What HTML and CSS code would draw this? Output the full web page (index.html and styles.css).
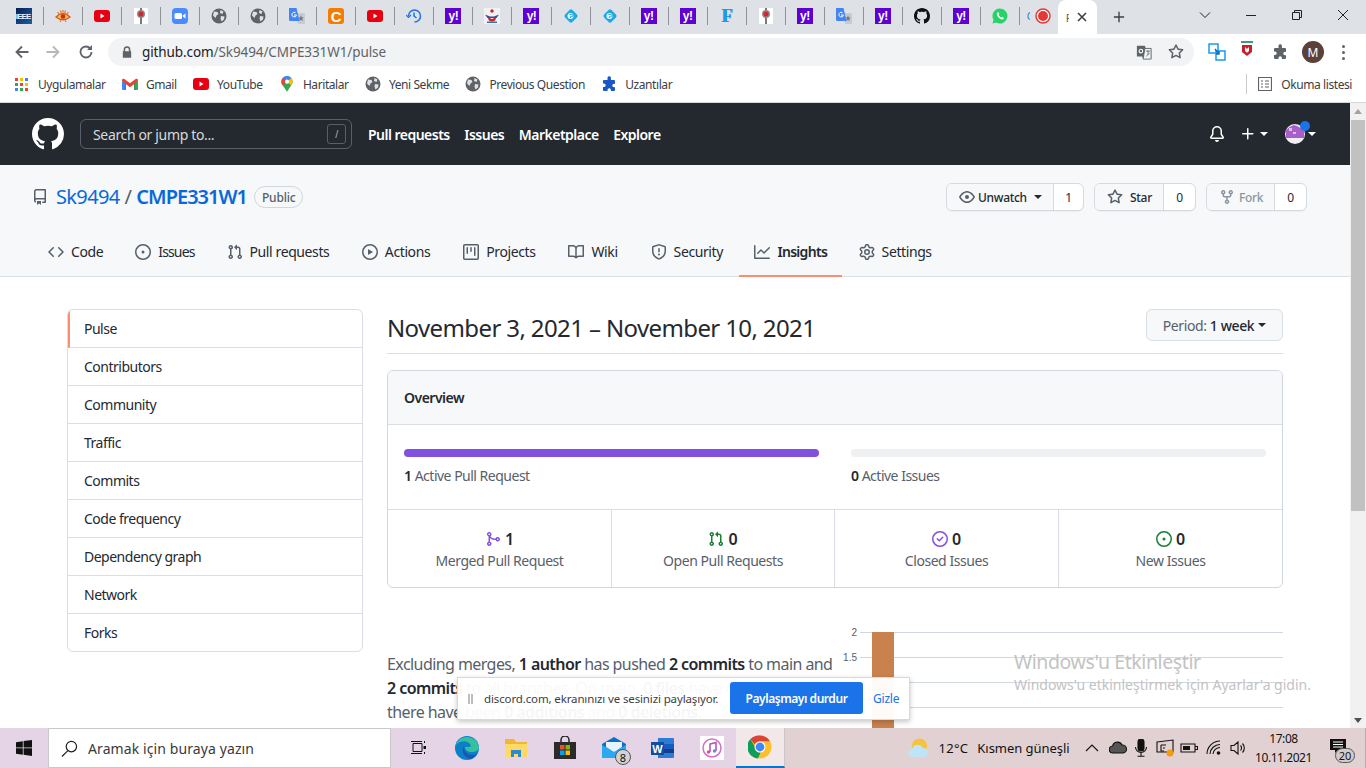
FILE: index.html
```html
<!DOCTYPE html>
<html lang="tr">
<head>
<meta charset="utf-8">
<title>Pulse · Sk9494/CMPE331W1</title>
<link rel="stylesheet" href="styles.css">
</head>
<body>
<svg class="sprite" aria-hidden="true">
<defs>
<symbol id="i-mark" viewBox="0 0 16 16"><path fill-rule="evenodd" d="M8 0C3.58 0 0 3.58 0 8c0 3.54 2.29 6.53 5.47 7.59.4.07.55-.17.55-.38 0-.19-.01-.82-.01-1.49-2.01.37-2.53-.49-2.69-.94-.09-.23-.48-.94-.82-1.13-.28-.15-.68-.52-.01-.53.63-.01 1.08.58 1.23.82.72 1.21 1.87.87 2.33.66.07-.52.28-.87.51-1.07-1.78-.2-3.64-.89-3.64-3.95 0-.87.31-1.59.82-2.15-.08-.2-.36-1.02.08-2.12 0 0 .67-.21 2.2.82.64-.18 1.32-.27 2-.27.68 0 1.36.09 2 .27 1.53-1.04 2.2-.82 2.2-.82.44 1.1.16 1.92.08 2.12.51.56.82 1.27.82 2.15 0 3.07-1.87 3.75-3.65 3.95.29.25.54.73.54 1.48 0 1.07-.01 1.93-.01 2.2 0 .21.15.46.55.38A8.013 8.013 0 0016 8c0-4.42-3.58-8-8-8z"/></symbol>
<symbol id="i-repo" viewBox="0 0 16 16"><path fill-rule="evenodd" d="M2 2.5A2.5 2.5 0 014.5 0h8.75a.75.75 0 01.75.75v12.5a.75.75 0 01-.75.75h-2.5a.75.75 0 110-1.5h1.75v-2h-8a1 1 0 00-.714 1.7.75.75 0 01-1.072 1.05A2.495 2.495 0 012 11.5v-9zm10.5-1V9h-8c-.356 0-.694.074-1 .208V2.5a1 1 0 011-1h8zM5 12.25v3.25a.25.25 0 00.4.2l1.45-1.087a.25.25 0 01.3 0L8.6 15.7a.25.25 0 00.4-.2v-3.25a.25.25 0 00-.25-.25h-3.5a.25.25 0 00-.25.25z"/></symbol>
<symbol id="i-code" viewBox="0 0 16 16"><path fill-rule="evenodd" d="M4.72 3.22a.75.75 0 011.06 1.06L2.06 8l3.72 3.72a.75.75 0 11-1.06 1.06L.47 8.53a.75.75 0 010-1.06l4.25-4.25zm6.56 0a.75.75 0 10-1.06 1.06L13.94 8l-3.72 3.72a.75.75 0 101.06 1.06l4.25-4.25a.75.75 0 000-1.06l-4.25-4.25z"/></symbol>
<symbol id="i-issue" viewBox="0 0 16 16"><path d="M8 9.5a1.5 1.5 0 100-3 1.5 1.5 0 000 3z"/><path fill-rule="evenodd" d="M8 0a8 8 0 100 16A8 8 0 008 0zM1.5 8a6.5 6.5 0 1113 0 6.5 6.5 0 01-13 0z"/></symbol>
<symbol id="i-pr" viewBox="0 0 16 16"><path fill-rule="evenodd" d="M7.177 3.073L9.573.677A.25.25 0 0110 .854v4.792a.25.25 0 01-.427.177L7.177 3.427a.25.25 0 010-.354zM3.75 2.5a.75.75 0 100 1.5.75.75 0 000-1.5zm-2.25.75a2.25 2.25 0 113 2.122v5.256a2.251 2.251 0 11-1.5 0V5.372A2.25 2.25 0 011.5 3.25zM11 2.5h-1V4h1a1 1 0 011 1v5.628a2.251 2.251 0 101.5 0V5A2.5 2.5 0 0011 2.5zm1 10.25a.75.75 0 111.5 0 .75.75 0 01-1.5 0zM3.75 12a.75.75 0 100 1.5.75.75 0 000-1.5z"/></symbol>
<symbol id="i-play" viewBox="0 0 16 16"><path fill-rule="evenodd" d="M1.5 8a6.5 6.5 0 1113 0 6.5 6.5 0 01-13 0zM8 0a8 8 0 100 16A8 8 0 008 0zM6.379 5.227A.25.25 0 006 5.442v5.117a.25.25 0 00.379.214l4.264-2.559a.25.25 0 000-.428L6.379 5.227z"/></symbol>
<symbol id="i-project" viewBox="0 0 16 16"><path fill-rule="evenodd" d="M1.75 0A1.75 1.75 0 000 1.75v12.5C0 15.216.784 16 1.75 16h12.5A1.75 1.75 0 0016 14.25V1.75A1.75 1.75 0 0014.25 0H1.75zM1.5 1.75a.25.25 0 01.25-.25h12.5a.25.25 0 01.25.25v12.5a.25.25 0 01-.25.25H1.75a.25.25 0 01-.25-.25V1.75zM11.75 3a.75.75 0 00-.75.75v7.5a.75.75 0 001.5 0v-7.5a.75.75 0 00-.75-.75zm-8.25.75a.75.75 0 011.5 0v5.5a.75.75 0 01-1.5 0v-5.5zM8 3a.75.75 0 00-.75.75v3.5a.75.75 0 001.5 0v-3.5A.75.75 0 008 3z"/></symbol>
<symbol id="i-book" viewBox="0 0 16 16"><path fill-rule="evenodd" d="M0 1.75A.75.75 0 01.75 1h4.253c1.227 0 2.317.59 3 1.501A3.744 3.744 0 0111.006 1h4.245a.75.75 0 01.75.75v10.5a.75.75 0 01-.75.75h-4.507a2.25 2.25 0 00-1.591.659l-.622.621a.75.75 0 01-1.06 0l-.622-.621A2.25 2.25 0 005.258 13H.75a.75.75 0 01-.75-.75V1.75zm8.755 3a2.25 2.25 0 012.25-2.25H14.5v9h-3.757c-.71 0-1.4.201-1.992.572l.004-7.322zm-1.504 7.324l.004-5.073-.002-2.253A2.25 2.25 0 005.003 2.5H1.5v9h3.757a3.75 3.75 0 011.994.574z"/></symbol>
<symbol id="i-shield" viewBox="0 0 16 16"><path fill-rule="evenodd" d="M7.467.133a1.75 1.75 0 011.066 0l5.25 1.68A1.75 1.75 0 0115 3.48V7c0 1.566-.32 3.182-1.303 4.682-.983 1.498-2.585 2.813-5.032 3.855a1.7 1.7 0 01-1.33 0c-2.447-1.042-4.049-2.357-5.032-3.855C1.32 10.182 1 8.566 1 7V3.48a1.75 1.75 0 011.217-1.667l5.25-1.68zm.61 1.429a.25.25 0 00-.153 0l-5.25 1.68a.25.25 0 00-.174.238V7c0 1.358.275 2.666 1.057 3.86.784 1.194 2.121 2.34 4.366 3.297a.2.2 0 00.154 0c2.245-.956 3.582-2.104 4.366-3.298C13.225 9.666 13.5 8.36 13.5 7V3.48a.25.25 0 00-.174-.237l-5.25-1.68zM9 10.5a1 1 0 11-2 0 1 1 0 012 0zm-.25-5.75a.75.75 0 10-1.5 0v3a.75.75 0 001.5 0v-3z"/></symbol>
<symbol id="i-graph" viewBox="0 0 16 16"><path fill-rule="evenodd" d="M1.5 1.75a.75.75 0 00-1.5 0v12.5c0 .414.336.75.75.75h14.5a.75.75 0 000-1.5H1.5V1.75zm14.28 2.53a.75.75 0 00-1.06-1.06L10 7.94 7.53 5.47a.75.75 0 00-1.06 0L3.22 8.72a.75.75 0 001.06 1.06L7 7.06l2.47 2.47a.75.75 0 001.06 0l5.25-5.25z"/></symbol>
<symbol id="i-gear" viewBox="0 0 16 16"><path fill-rule="evenodd" d="M7.429 1.525a6.593 6.593 0 011.142 0c.036.003.108.036.137.146l.289 1.105c.147.56.55.967.997 1.189.174.086.341.183.501.29.417.278.97.423 1.53.27l1.102-.303c.11-.03.175.016.195.046.219.31.41.641.573.989.014.031.022.11-.059.19l-.815.806c-.411.406-.562.957-.53 1.456a4.588 4.588 0 010 .582c-.032.499.119 1.05.53 1.456l.815.806c.08.08.073.159.059.19a6.494 6.494 0 01-.573.99c-.02.029-.086.074-.195.045l-1.103-.303c-.559-.153-1.112-.008-1.529.27-.16.107-.327.204-.5.29-.449.222-.851.628-.998 1.189l-.289 1.105c-.029.11-.101.143-.137.146a6.613 6.613 0 01-1.142 0c-.036-.003-.108-.037-.137-.146l-.289-1.105c-.147-.56-.55-.967-.997-1.189a4.502 4.502 0 01-.501-.29c-.417-.278-.97-.423-1.53-.27l-1.102.303c-.11.03-.175-.016-.195-.046a6.492 6.492 0 01-.573-.989c-.014-.031-.022-.11.059-.19l.815-.806c.411-.406.562-.957.53-1.456a4.587 4.587 0 010-.582c.032-.499-.119-1.05-.53-1.456l-.815-.806c-.08-.08-.073-.159-.059-.19a6.44 6.44 0 01.573-.99c.02-.029.086-.075.195-.045l1.103.303c.559.153 1.112.008 1.529-.27.16-.107.327-.204.5-.29.449-.222.851-.628.998-1.189l.289-1.105c.029-.11.101-.143.137-.146zM8 0c-.236 0-.47.01-.701.03-.743.065-1.29.615-1.458 1.261l-.29 1.106c-.017.066-.078.158-.211.224a5.994 5.994 0 00-.668.386c-.123.082-.233.09-.3.071L3.27 2.776c-.644-.177-1.392.02-1.82.63a7.977 7.977 0 00-.704 1.217c-.315.675-.111 1.422.363 1.891l.815.806c.05.048.098.147.088.294a6.084 6.084 0 000 .772c.01.147-.038.246-.088.294l-.815.806c-.474.469-.678 1.216-.363 1.891.2.428.436.835.704 1.218.428.609 1.176.806 1.82.63l1.103-.303c.066-.019.176-.011.299.071.213.143.436.272.668.386.133.066.194.158.212.224l.289 1.106c.169.646.715 1.196 1.458 1.26a8.094 8.094 0 001.402 0c.743-.064 1.29-.614 1.458-1.26l.29-1.106c.017-.066.078-.158.211-.224a5.98 5.98 0 00.668-.386c.123-.082.233-.09.3-.071l1.102.302c.644.177 1.392-.02 1.82-.63.268-.382.505-.789.704-1.217.315-.675.111-1.422-.364-1.891l-.814-.806c-.05-.048-.098-.147-.088-.294a6.1 6.1 0 000-.772c-.01-.147.039-.246.088-.294l.814-.806c.475-.469.679-1.216.364-1.891a7.992 7.992 0 00-.704-1.218c-.428-.609-1.176-.806-1.82-.63l-1.103.303c-.066.019-.176.011-.299-.071a5.991 5.991 0 00-.668-.386c-.133-.066-.194-.158-.212-.224L10.16 1.29C9.99.645 9.444.095 8.701.031A8.094 8.094 0 008 0zm1.5 8a1.5 1.5 0 11-3 0 1.5 1.5 0 013 0zM11 8a3 3 0 11-6 0 3 3 0 016 0z"/></symbol>
<symbol id="i-eye" viewBox="0 0 16 16"><path fill-rule="evenodd" d="M1.679 7.932c.412-.621 1.242-1.75 2.366-2.717C5.175 4.242 6.527 3.5 8 3.5c1.473 0 2.824.742 3.955 1.715 1.124.967 1.954 2.096 2.366 2.717a.119.119 0 010 .136c-.412.621-1.242 1.75-2.366 2.717C10.825 11.758 9.473 12.5 8 12.5c-1.473 0-2.824-.742-3.955-1.715C2.92 9.818 2.09 8.69 1.679 8.068a.119.119 0 010-.136zM8 2c-1.981 0-3.67.992-4.933 2.078C1.797 5.169.88 6.423.43 7.1a1.619 1.619 0 000 1.798c.45.678 1.367 1.932 2.637 3.024C4.329 13.008 6.019 14 8 14c1.981 0 3.67-.992 4.933-2.078 1.27-1.091 2.187-2.345 2.637-3.023a1.619 1.619 0 000-1.798c-.45-.678-1.367-1.932-2.637-3.023C11.671 2.992 9.981 2 8 2zm0 8a2 2 0 100-4 2 2 0 000 4z"/></symbol>
<symbol id="i-star" viewBox="0 0 16 16"><path fill-rule="evenodd" d="M8 .25a.75.75 0 01.673.418l1.882 3.815 4.21.612a.75.75 0 01.416 1.279l-3.046 2.97.719 4.192a.75.75 0 01-1.088.791L8 12.347l-3.766 1.98a.75.75 0 01-1.088-.79l.72-4.194L.818 6.374a.75.75 0 01.416-1.28l4.21-.611L7.327.668A.75.75 0 018 .25zm0 2.445L6.615 5.5a.75.75 0 01-.564.41l-3.097.45 2.24 2.184a.75.75 0 01.216.664l-.528 3.084 2.769-1.456a.75.75 0 01.698 0l2.77 1.456-.53-3.084a.75.75 0 01.216-.664l2.24-2.183-3.096-.45a.75.75 0 01-.564-.41L8 2.694z"/></symbol>
<symbol id="i-fork" viewBox="0 0 16 16"><path fill-rule="evenodd" d="M5 3.25a.75.75 0 11-1.5 0 .75.75 0 011.5 0zm0 2.122a2.25 2.25 0 10-1.5 0v.878A2.25 2.25 0 005.75 8.5h1.5v2.128a2.251 2.251 0 101.5 0V8.5h1.5a2.25 2.25 0 002.25-2.25v-.878a2.25 2.25 0 10-1.5 0v.878a.75.75 0 01-.75.75h-4.5A.75.75 0 015 6.25v-.878zm3.75 7.378a.75.75 0 11-1.5 0 .75.75 0 011.5 0zm3-8.75a.75.75 0 100-1.5.75.75 0 000 1.5z"/></symbol>
<symbol id="i-bell" viewBox="0 0 16 16"><path d="M8 16a2 2 0 001.985-1.75c.017-.137-.097-.25-.235-.25h-3.5c-.138 0-.252.113-.235.25A2 2 0 008 16z"/><path fill-rule="evenodd" d="M8 1.5A3.5 3.5 0 004.5 5v2.947c0 .346-.102.683-.294.97l-1.703 2.556a.018.018 0 00-.003.01l.001.006c0 .002.002.004.004.006a.017.017 0 00.006.004l.007.001h10.964l.007-.001a.018.018 0 00.006-.004.016.016 0 00.004-.006l.001-.007a.017.017 0 00-.003-.01l-1.703-2.554a1.75 1.75 0 01-.294-.97V5A3.5 3.5 0 008 1.5zM3 5a5 5 0 0110 0v2.947c0 .05.015.098.042.139l1.703 2.555A1.518 1.518 0 0113.482 13H2.518a1.518 1.518 0 01-1.263-2.36l1.703-2.554A.25.25 0 003 7.947V5z"/></symbol>
<symbol id="i-merge" viewBox="0 0 16 16"><path fill-rule="evenodd" d="M5 3.254V3.25v.005a.75.75 0 110-.005v.004zm.45 1.9a2.25 2.25 0 10-1.95.218v5.256a2.25 2.25 0 101.5 0V7.123A5.735 5.735 0 009.25 9h1.378a2.251 2.251 0 100-1.5H9.25a4.25 4.25 0 01-3.8-2.346zM12.75 9a.75.75 0 100-1.5.75.75 0 000 1.5zm-8.5 4.5a.75.75 0 100-1.5.75.75 0 000 1.5z"/></symbol>
<symbol id="i-closed" viewBox="0 0 16 16"><path d="M11.28 6.78a.75.75 0 00-1.06-1.06L7.25 8.69 5.78 7.22a.75.75 0 00-1.06 1.06l2 2a.75.75 0 001.06 0l3.5-3.5z"/><path fill-rule="evenodd" d="M16 8A8 8 0 110 8a8 8 0 0116 0zm-1.5 0a6.5 6.5 0 11-13 0 6.5 6.5 0 0113 0z"/></symbol>
<symbol id="i-plus" viewBox="0 0 16 16"><path fill-rule="evenodd" d="M7.75 2a.75.75 0 01.75.75V7h4.25a.75.75 0 110 1.5H8.5v4.25a.75.75 0 11-1.5 0V8.5H2.75a.75.75 0 010-1.5H7V2.75A.75.75 0 017.75 2z"/></symbol>
<symbol id="f-yt" viewBox="0 0 16 16"><rect y="2" width="16" height="12" rx="3" fill="#e60012"/><path d="M6.5 5.5v5l4-2.5z" fill="#fff"/></symbol>
<symbol id="f-globe" viewBox="0 0 16 16"><circle cx="8" cy="8" r="7.5" fill="#5f6368"/><path d="M3 3.5l3.5.5 1 2-2 1.5-1 2.5-2.5-2.5zM9.5 2l3 1.5-1 2.5-2.5-1zM10 8l3.5.5-.5 3-2.5 2-1-3z" fill="#dee1e6"/></symbol>
<symbol id="f-tr" viewBox="0 0 16 16"><path d="M7 5h9v10a1 1 0 01-1 1H9z" fill="#c8ccd1"/><path d="M12 7l.8 2.5h2.2l-1.8 1.3.7 2.4-1.9-1.5-1.9 1.5.7-2.4-1.8-1.3h2.2z" fill="#70757a"/><path d="M0 0h7.500L10.500 13H1.500A1.500 1.500 0 010 11.500z" fill="#4285f4"/><path d="M6.500 4.700a2.300 2.300 0 101 2.300H5" fill="none" stroke="#fff" stroke-width="1"/></symbol>
<symbol id="f-pin" viewBox="0 0 16 16"><rect x="1" width="14" height="16" fill="#fff"/><path d="M8 0v5M8 8v8" stroke="#333" stroke-width="1.300"/><circle cx="8" cy="6" r="4" fill="#8a8a8a"/><circle cx="8" cy="6" r="2.500" fill="#d9252a"/></symbol>
<symbol id="f-diamond" viewBox="0 0 16 16"><rect x="2.800" y="2.800" width="10.400" height="10.400" rx="2" fill="#1fa9e4" transform="rotate(45 8 8)"/><circle cx="7.500" cy="8" r="3" fill="#e8f7fd"/><path d="M6.500 6.500h2.200a1.100 1.100 0 010 2.200H7.400V10" fill="none" stroke="#1fa9e4" stroke-width="1"/></symbol>
<symbol id="g-puzzle" viewBox="0 0 16 16"><path d="M6.500 1.500a1.800 1.800 0 013.400 0V4H13a1 1 0 011 1v2.800h-1a1.700 1.700 0 000 3.400h1V14a1 1 0 01-1 1H9.900v-1a1.700 1.700 0 00-3.400 0v1H3a1 1 0 01-1-1v-3H3a1.700 1.700 0 000-3.400H2V5a1 1 0 011-1h3.500z"/></symbol>
<symbol id="g-chrome" viewBox="0 0 24 24"><circle cx="12" cy="12" r="11.500" fill="#fbc02d"/><path d="M12 .5a11.500 11.500 0 019.960 5.750H12a5.750 5.750 0 00-5.200 3.300L2.400 4.100A11.500 11.500 0 0112 .5z" fill="#db4437"/><path d="M2.400 4.100l4.800 8.300a5 5 0 005.500 5l-2.900 6A11.500 11.500 0 012.400 4.100z" fill="#0f9d58"/><circle cx="12" cy="12" r="5.500" fill="#fff"/><circle cx="12" cy="12" r="4.400" fill="#4285f4"/></symbol>
</defs>
</svg>

<div class="screen">
  <div class="tabstrip">
    <div class="tab first"><span class="fav f-ieee">IEEE</span></div>
    <div class="tab"><svg class="fav" viewBox="0 0 16 16"><path d="M1 9q7-7 14 0-7 5.500-14 0z" fill="#f9c84a" stroke="#d9541e" stroke-width="1.300"/><circle cx="8" cy="8.500" r="2.300" fill="#c62f10"/><path d="M2.500 4l1.500 2M5.500 2.500l.8 2.500M8 2v2.500M10.500 2.500l-.8 2.500M13.500 4L12 6M5 14l.8-1.500M11 14l-.8-1.500" stroke="#e8701a" stroke-width="1.100"/></svg></div>
    <div class="tab"><svg class="fav"><use href="#f-yt"/></svg></div>
    <div class="tab"><svg class="fav"><use href="#f-pin"/></svg></div>
    <div class="tab"><svg class="fav" viewBox="0 0 16 16"><rect width="16" height="16" rx="4" fill="#4a8cff"/><rect x="2.500" y="5" width="7.500" height="6" rx="1.500" fill="#fff"/><path d="M10.800 7.400l2.700-2v5.200l-2.700-2z" fill="#fff"/></svg></div>
    <div class="tab"><svg class="fav"><use href="#f-globe"/></svg></div>
    <div class="tab"><svg class="fav"><use href="#f-globe"/></svg></div>
    <div class="tab"><svg class="fav"><use href="#f-tr"/></svg></div>
    <div class="tab"><span class="fav f-c">C</span></div>
    <div class="tab"><svg class="fav"><use href="#f-yt"/></svg></div>
    <div class="tab"><svg class="fav" viewBox="0 0 16 16" fill="none" stroke="#1a73e8" stroke-width="1.500"><path d="M2.500 8a6 6 0 116 6"/><path d="M8 4.500V8l2.500 2"/><path d="M0 7l2.500 2.500L5 7" stroke-width="1.200"/></svg></div>
    <div class="tab"><span class="fav f-y">y!</span></div>
    <div class="tab"><svg class="fav" viewBox="0 0 16 16"><rect width="16" height="16" fill="#f2f2f2"/><circle cx="8" cy="3" r="1.700" fill="#c62828"/><path d="M1 6.500l5 2h4l5-2-2.500 3.500h-9z" fill="#2b4ea0"/><path d="M4 9.500a4 4 0 008 0l-1.500-.5a2.600 2.600 0 01-5 0z" fill="#c62828"/><path d="M3 13.500h10v1.500H3z" fill="#3b6db8"/></svg></div>
    <div class="tab"><span class="fav f-y">y!</span></div>
    <div class="tab"><svg class="fav"><use href="#f-diamond"/></svg></div>
    <div class="tab"><svg class="fav"><use href="#f-diamond"/></svg></div>
    <div class="tab"><span class="fav f-y">y!</span></div>
    <div class="tab"><span class="fav f-y">y!</span></div>
    <div class="tab"><span class="fav f-f">F</span></div>
    <div class="tab"><svg class="fav"><use href="#f-pin"/></svg></div>
    <div class="tab"><span class="fav f-y">y!</span></div>
    <div class="tab"><svg class="fav"><use href="#f-tr"/></svg></div>
    <div class="tab"><span class="fav f-y">y!</span></div>
    <div class="tab"><svg class="fav gh"><use href="#i-mark"/></svg></div>
    <div class="tab"><span class="fav f-y">y!</span></div>
    <div class="tab"><svg class="fav" viewBox="0 0 16 16"><path d="M8 .5a7.500 7.500 0 00-6.400 11.400L.5 15.500l3.700-1A7.500 7.500 0 108 .5z" fill="#25d366"/><path d="M5.500 4.500c-1 1-.8 2.700.7 4.600 1.600 2 3.500 2.800 4.700 2.200.8-.4 1-1.300.8-1.600L10 8.700l-.9.800C8.300 9.200 7 8 6.700 7.100l.7-.9-.8-1.800c-.3-.2-.8 0-1.100.1z" fill="#fff"/></svg></div>
    <div class="tab last"><span class="clip-g">G</span><svg class="fav rec" viewBox="0 0 16 16"><circle cx="8" cy="8" r="7" fill="#fff" stroke="#e53935" stroke-width="1.500"/><circle cx="8" cy="8" r="5" fill="#e53935"/></svg></div>
    <div class="tab-active"><span class="clip-p">P</span><svg class="tab-x" viewBox="0 0 10 10"><path d="M1 1l8 8M9 1l-8 8"/></svg></div>
    <svg class="newtab" viewBox="0 0 14 14"><path d="M7 1v12M1 7h12"/></svg>
    <div class="winctl">
      <svg class="wc wc-v" viewBox="0 0 12 12"><path d="M1 3.500l5 5 5-5"/></svg>
      <svg class="wc" viewBox="0 0 12 12"><path d="M1 6.500h10"/></svg>
      <svg class="wc" viewBox="0 0 12 12"><path d="M1.500 3.500h7v7h-7zM3.500 3.500v-2h7v7h-2"/></svg>
      <svg class="wc" viewBox="0 0 12 12"><path d="M1 1l10 10M11 1L1 11"/></svg>
    </div>
  </div>

  <div class="toolbar">
    <svg class="nav-ic back" viewBox="0 0 16 16"><path d="M14.500 8H2.500M8 2.500L2.500 8 8 13.500"/></svg>
    <svg class="nav-ic fwd" viewBox="0 0 16 16"><path d="M1.500 8h12M8 2.500L13.500 8 8 13.500"/></svg>
    <svg class="nav-ic reload" viewBox="0 0 16 16"><path d="M13.500 8A5.500 5.500 0 112.500 8a5.500 5.500 0 019.600-3.600"/><path class="solid" d="M14 1v5H9z"/></svg>
    <div class="omnibox">
      <svg class="lock" viewBox="0 0 12 14"><path d="M2 6V4a4 4 0 018 0v2h1v8H1V6zm1.800 0h4.400V4a2.200 2.200 0 00-4.400 0z"/></svg>
      <span class="url"><b>github.com</b>/Sk9494/CMPE331W1/pulse</span>
      <svg class="omni-tr" viewBox="0 0 18 18"><path d="M1 2h9l1 3h6v12H8l-1-3H1z" fill="#5f6368"/><path d="M10 5h7v12H8z" fill="#f1f3f4" stroke="#5f6368"/><circle cx="5.500" cy="8" r="2" fill="none" stroke="#fff" stroke-width="1.200"/><path d="M11 8h5M13.500 7v5M11.500 14l4-4" stroke="#5f6368" stroke-width=".9"/></svg>
      <svg class="omni-star" viewBox="0 0 16 16"><use href="#i-star"/></svg>
    </div>
    <svg class="ext ext-tr" viewBox="0 0 18 18" fill="none" stroke="#1a9bf0" stroke-width="1.500"><path d="M1 1h9v9H1zM8 8h9v9H8z"/><path d="M7 6l4 5m0-3v3H8" stroke="#0b6fc2"/></svg>
    <svg class="ext ext-mc" viewBox="0 0 16 18"><path d="M2 0h12v2H2z" fill="#3b9d7d"/><path d="M3 4h10v7l-5 4-5-4z" fill="#c8202a"/><path d="M6 6v4l2 1.800L10 10V6L8 8z" fill="#fff"/></svg>
    <svg class="ext ext-pz"><use href="#g-puzzle"/></svg>
    <span class="profile">M</span>
    <span class="dots"><i></i><i></i><i></i></span>
  </div>

  <div class="bookmarks">
    <span class="bm bm-apps"><span class="apps"><i class="r"></i><i class="y"></i><i class="b"></i><i class="g"></i><i class="r"></i><i class="y"></i><i class="b"></i><i class="g"></i><i class="r"></i></span>Uygulamalar</span>
    <span class="bm"><svg class="bm-ic" viewBox="0 0 16 12"><path d="M1 12V2l7 5.500L15 2v10h-3V6L8 9 4 6v6z" fill="#5f6368"/><path d="M0 2a1.500 1.500 0 012.400-1L8 5.300 13.600 1A1.500 1.500 0 0116 2v1L8 9 0 3z" fill="#ea4335"/><path d="M0 3v8a1 1 0 001 1h2.500V5.500z" fill="#4285f4"/><path d="M16 3v8a1 1 0 01-1 1h-2.500V5.500z" fill="#34a853"/></svg>Gmail</span>
    <span class="bm"><svg class="bm-ic"><use href="#f-yt"/></svg>YouTube</span>
    <span class="bm"><svg class="bm-ic" viewBox="0 0 12 17"><path d="M6 0a6 6 0 016 6c0 3.500-4 6.500-6 11-2-4.500-6-7.500-6-11a6 6 0 016-6z" fill="#34a853"/><path d="M1.500 2L6 6l4.500-4A6 6 0 006 0a6 6 0 00-4.500 2z" fill="#4285f4"/><path d="M1.500 2A6 6 0 000 6c0 1.500.6 2.800 1.500 4L6 6z" fill="#ea4335"/><path d="M12 6a6 6 0 00-1.500-4L6 6l4 3.800C11.200 8.600 12 7.400 12 6z" fill="#fbbc04"/><circle cx="6" cy="6" r="2.200" fill="#fff"/></svg>Haritalar</span>
    <span class="bm"><svg class="bm-ic"><use href="#f-globe"/></svg>Yeni Sekme</span>
    <span class="bm"><svg class="bm-ic"><use href="#f-globe"/></svg>Previous Question</span>
    <span class="bm"><svg class="bm-ic blue"><use href="#g-puzzle"/></svg>Uzantılar</span>
    <span class="reading"><svg class="rl-ic" viewBox="0 0 14 14"><path d="M.5.500h13v13H.5zM3 4h2M7 4h4M3 7h2M7 7h4M3 10h2M7 10h4"/></svg>Okuma listesi</span>
  </div>

  <div class="viewport">
    <div class="page">
      <header class="gh-header">
        <svg class="gh-logo"><use href="#i-mark"/></svg>
        <div class="gh-search"><span>Search or jump to...</span><kbd class="slash">/</kbd></div>
        <nav class="gh-nav"><a>Pull requests</a><a>Issues</a><a>Marketplace</a><a>Explore</a></nav>
        <div class="gh-right">
          <svg class="oct16"><use href="#i-bell"/></svg>
          <span class="plus-group"><svg class="oct16 plus"><use href="#i-plus"/></svg><i class="caret light"></i></span>
          <span class="avatar-group"><svg class="avatar" viewBox="0 0 20 20"><circle cx="10" cy="10" r="10" fill="#f1eef3"/><path d="M1 6q4-4 8-5l3 1 7 4v8H1z" fill="#a85fc9"/><path d="M4 4h3v3H4zM8 8h3v2H8z" fill="#d9c2e8"/></svg><i class="dot"></i><i class="caret light"></i></span>
        </div>
      </header>

      <section class="repohead">
        <div class="repo-row">
          <svg class="oct16 repo-ic"><use href="#i-repo"/></svg>
          <a class="owner">Sk9494</a><span class="sep">/</span><a class="rname">CMPE331W1</a>
          <span class="pub">Public</span>
          <div class="actions">
            <div class="btn-group"><span class="btn watch"><svg class="oct16"><use href="#i-eye"/></svg>Unwatch<i class="caret"></i></span><span class="count">1</span></div>
            <div class="btn-group"><span class="btn star"><svg class="oct16"><use href="#i-star"/></svg>Star</span><span class="count">0</span></div>
            <div class="btn-group"><span class="btn fork"><svg class="oct16"><use href="#i-fork"/></svg>Fork</span><span class="count">0</span></div>
          </div>
        </div>
        <nav class="repo-tabs">
          <a class="rt"><svg class="oct16"><use href="#i-code"/></svg>Code</a>
          <a class="rt rt-issues"><svg class="oct16"><use href="#i-issue"/></svg>Issues</a>
          <a class="rt"><svg class="oct16"><use href="#i-pr"/></svg>Pull requests</a>
          <a class="rt"><svg class="oct16"><use href="#i-play"/></svg>Actions</a>
          <a class="rt"><svg class="oct16"><use href="#i-project"/></svg>Projects</a>
          <a class="rt"><svg class="oct16"><use href="#i-book"/></svg>Wiki</a>
          <a class="rt"><svg class="oct16"><use href="#i-shield"/></svg>Security</a>
          <a class="rt on"><svg class="oct16"><use href="#i-graph"/></svg>Insights</a>
          <a class="rt"><svg class="oct16"><use href="#i-gear"/></svg>Settings</a>
        </nav>
      </section>

      <div class="content">
        <aside class="side">
          <a class="side-item on">Pulse</a>
          <a class="side-item">Contributors</a>
          <a class="side-item">Community</a>
          <a class="side-item">Traffic</a>
          <a class="side-item">Commits</a>
          <a class="side-item">Code frequency</a>
          <a class="side-item">Dependency graph</a>
          <a class="side-item">Network</a>
          <a class="side-item">Forks</a>
        </aside>
        <main class="main">
          <div class="main-head">
            <h2>November 3, 2021 – November 10, 2021</h2>
            <span class="period">Period: <b>1 week</b><i class="caret dark"></i></span>
          </div>
          <div class="box">
            <div class="box-head">Overview</div>
            <div class="box-bars">
              <div class="barcol"><div class="track"><div class="fill"></div></div><p><b>1</b> Active Pull Request</p></div>
              <div class="barcol"><div class="track"></div><p><b>0</b> Active Issues</p></div>
            </div>
            <div class="stats">
              <div class="stat"><div class="num"><svg class="oct16 purple"><use href="#i-merge"/></svg>1</div><div class="lbl">Merged Pull Request</div></div>
              <div class="stat"><div class="num"><svg class="oct16 green"><use href="#i-pr"/></svg>0</div><div class="lbl">Open Pull Requests</div></div>
              <div class="stat"><div class="num"><svg class="oct16 purple"><use href="#i-closed"/></svg>0</div><div class="lbl">Closed Issues</div></div>
              <div class="stat"><div class="num"><svg class="oct16 green"><use href="#i-issue"/></svg>0</div><div class="lbl">New Issues</div></div>
            </div>
          </div>
          <div class="summary">
            <p class="sumtext">Excluding merges, <b>1 author</b> has pushed <b>2 commits</b> to main and<br><b>2 commits</b> to all branches. On main, <b>0 files</b> have changed and<br>there have been <b>0 additions</b> and <b>0 deletions</b>.</p>
            <svg class="chart" viewBox="0 0 446 110">
              <g class="gridl"><path d="M23 7.500H446M23 32.500H446M23 57.500H446M23 82.500H446M23 107.500H446"/></g>
              <rect x="35" y="7" width="22" height="103" fill="#c9824d"/>
              <g class="ticks"><text x="20" y="11">2</text><text x="20" y="36">1.5</text><text x="20" y="61">1</text><text x="20" y="86">0.5</text></g>
            </svg>
          </div>
        </main>
      </div>
    </div>
    <div class="scrollbar">
      <i class="arr up"></i>
      <div class="thumb"></div>
      <i class="arr down"></i>
    </div>
    <div class="watermark"><div class="wm1">Windows'u Etkinleştir</div><div class="wm2">Windows'u etkinleştirmek için Ayarlar'a gidin.</div></div>
    <div class="sharebar">
      <span class="grip"></span>
      <span class="share-t">discord.com, ekranınızı ve sesinizi paylaşıyor.</span>
      <span class="share-b">Paylaşmayı durdur</span>
      <span class="share-h">Gizle</span>
    </div>
  </div>

  <footer class="taskbar">
    <svg class="winlogo" viewBox="0 0 16 16"><path d="M0 2.200l6.800-1v6.300H0zM7.600 1.100L16 0v7.500H7.600zM0 8.300h6.800v6.400L0 13.800zM7.600 8.300H16V16l-8.400-1.200z"/></svg>
    <div class="tb-search"><svg class="tb-mag" viewBox="0 0 18 18"><circle cx="11" cy="7" r="5.500"/><path d="M7 11.500l-6 6"/></svg>Aramak için buraya yazın</div>
    <div class="tile"><svg class="tvw" viewBox="0 0 16 16"><path d="M3 3.500h9v8H3zM1 1.500h11M1 13.500h11M14.500 1v2M14.500 12v2"/><rect x="13.500" y="6" width="2.500" height="3" fill="#111" stroke="none"/></svg></div>
    <div class="tile"><svg class="tb-ic" viewBox="0 0 24 24"><circle cx="12" cy="12" r="12" fill="#0c7fc9"/><path d="M24 12c0-6-5-11-12-11C6 1 2 5 1 9c3-4 9-5 13-2 2 1.500 2 3 1 4h-5c0 3 3 5 7 5 3 0 6-1 7-4z" fill="#35c1a0"/><path d="M9 10c-3 4-1 11 6 13 3-.5 5-2 7-5-4 2-10 1-12-3-.7-1.500-1-3-1-5z" fill="#1a57b0"/></svg></div>
    <div class="tile"><svg class="tb-ic" viewBox="0 0 24 24"><path d="M1 3h9l2 3h11v15H1z" fill="#f2b635"/><path d="M1 8h22v13H1z" fill="#ffd865"/><path d="M7 14h10v7h-3v-3h-4v3H7z" fill="#2a8ad4"/></svg></div>
    <div class="tile"><svg class="tb-ic" viewBox="0 0 24 24"><path d="M8 6V4a4 4 0 018 0v2" fill="none" stroke="#222" stroke-width="1.500"/><path d="M1 6h22v17H1z" fill="#2b2b2b"/><rect x="7" y="9" width="4.500" height="4.500" fill="#f25022"/><rect x="12.500" y="9" width="4.500" height="4.500" fill="#7fba00"/><rect x="7" y="14.500" width="4.500" height="4.500" fill="#00a4ef"/><rect x="12.500" y="14.500" width="4.500" height="4.500" fill="#ffb900"/></svg></div>
    <div class="tile mail"><svg class="tb-ic" viewBox="0 0 24 24"><path d="M0 8L12 1l12 7v14H0z" fill="#0f6fc6"/><path d="M0 9l12 7 12-7v13H0z" fill="#2ba8ee"/><path d="M4 6h16v5l-8 5-8-5z" fill="#e8f4fc"/></svg><span class="badge">8</span></div>
    <div class="tile"><svg class="tb-ic" viewBox="0 0 24 24"><path d="M7 2h15a1 1 0 011 1v18a1 1 0 01-1 1H7z" fill="#2b7cd3"/><path d="M7 8h16v5H7z" fill="#185abd"/><path d="M7 13h16v4H7z" fill="#103f91"/><rect x="0" y="6" width="13" height="13" fill="#124ca5"/><text x="6.500" y="16.500" class="w-txt">W</text></svg></div>
    <div class="tile"><svg class="tb-ic" viewBox="0 0 24 24"><rect width="24" height="24" fill="#fff"/><circle cx="12" cy="12" r="9" fill="none" stroke="#d36fc6" stroke-width="1.500"/><path d="M10 16V8l6-1.500V15" fill="none" stroke="#b04fb0" stroke-width="1.500"/><circle cx="8.500" cy="16" r="1.700" fill="#ea4c89"/><circle cx="14.500" cy="15" r="1.700" fill="#5a8cf0"/></svg></div>
    <div class="tile active"><svg class="tb-ic"><use href="#g-chrome"/></svg></div>
    <div class="tray">
      <svg class="tr-weather" viewBox="0 0 24 20"><circle cx="13" cy="8" r="8" fill="#f8c33c"/><path d="M6 19.500a4.500 4.500 0 01-.5-9 6 6 0 0111-.5A4.500 4.500 0 0118 19.500z" fill="#bfe3f7"/></svg>
      <span class="temp">12°C</span><span class="wx">Kısmen güneşli</span>
      <svg class="tr chev" viewBox="0 0 14 14"><path d="M1 10l6-6 6 6"/></svg>
      <svg class="tr cloud" viewBox="0 0 18 14"><path d="M4 12a3.500 3.500 0 01-.4-7A5 5 0 0113 4a4 4 0 011 8z" fill="#555"/></svg>
      <svg class="tr mic" viewBox="0 0 14 18"><rect x="4" y="0" width="6" height="12" rx="3" fill="#111"/><path d="M1.500 8a5.500 5.500 0 0011 0M7 13.500V17M3.500 17.200h7"/></svg>
      <svg class="tr meet" viewBox="0 0 18 18"><path d="M1 3l16-2v12H1z"/><path d="M5 6h5M5 6v6h3M7 9h2"/><circle cx="14" cy="14" r="3.500" fill="#f59a0c" stroke="none"/></svg>
      <svg class="tr batt" viewBox="0 0 18 12"><path d="M1 2h14v8H1zM15.500 4.500h2v3h-2"/><rect x="3" y="4" width="7" height="4" fill="#111" stroke="none"/></svg>
      <svg class="tr wifi" viewBox="0 0 16 16"><path d="M1 14A13 13 0 0114 1M4 14A10 10 0 0114 4.500M7 14a7 7 0 017-6.500"/><circle cx="12.500" cy="13" r="1.800" fill="#111" stroke="none"/></svg>
      <svg class="tr vol" viewBox="0 0 16 16"><path d="M1 5.500h3L8 2v12l-4-3.500H1zM10.500 5.500a3.500 3.500 0 010 5M12.500 3.500a6.500 6.500 0 010 9"/></svg>
      <div class="clock"><div>17:08</div><div>10.11.2021</div></div>
      <div class="notif"><svg class="notif-ic" viewBox="0 0 16 14"><path d="M0 0h16v11H8l-3 3v-3H0z"/><path d="M3 3h10M3 5.500h10M3 8h10" stroke="#fff"/></svg><span class="notif-n">20</span></div>
      <i class="desktop"></i>
    </div>
  </footer>
</div>
</body>
</html>
```

FILE: styles.css
```css
* { box-sizing: border-box; }
html, body { margin: 0; padding: 0; height: 100%; }
body { font-family: "Noto Sans", "Open Sans", sans-serif; color: #24292f; overflow: hidden; }
.sprite { width: 0; height: 0; display: block; overflow: hidden; }
p, h2 { margin: 0; font-weight: 400; }
svg { display: block; flex: none; }
.screen { width: 1366px; height: 768px; display: flex; flex-direction: column; overflow: hidden; }

/* tab strip */
.tabstrip { height: 34px; flex: none; background: #dee1e6; display: flex; align-items: center; padding-left: 4.500px; }
.tab { width: 39.05px; height: 18px; margin-top: -2px; flex: none; display: flex; align-items: center; justify-content: center; border-right: 1px solid #8f9296; }
.tab.first { width: 39.4px; }
.tab.last { width: 37.600px; border-right: 0; justify-content: flex-end; padding-right: 7px; gap: 0; overflow: hidden; }
.fav { width: 16px; height: 16px; display: block; flex: none; }
span.fav { display: flex; align-items: center; justify-content: center; font-family: "Liberation Sans", sans-serif; font-weight: 700; }
.f-y { background: #5f01d1; color: #fff; font-size: 12px; letter-spacing: -.5px; }
.f-ieee { background: linear-gradient(135deg, #0b1f4f, #1a5fa8); color: #e6eeff; font-size: 8px; letter-spacing: -.9px; padding-right: 1px; }
.f-c { background: #f57c00; color: #fff; font-size: 15px; border-radius: 3px; }
.f-f { color: #1a9ae8; font-size: 18px; font-family: "Liberation Serif", serif !important; text-shadow: 1px 0 0 #1a9ae8; }
.gh { fill: #111; }
.clip-g { font-size: 10px; color: #1a73e8; width: 3px; overflow: hidden; margin-right: 5px; }
.tab-active { width: 39px; height: 34px; background: #fff; border-radius: 8px 8px 0 0; display: flex; align-items: center; flex: none; padding-left: 8px; }
.clip-p { font-size: 11px; color: #5f6368; width: 3px; overflow: hidden; margin-right: 8px; }
.tab-x { width: 10px; height: 10px; fill: none; stroke: #3c4043; stroke-width: 1.600; }
.newtab { width: 12px; height: 12px; margin-left: 16px; fill: none; stroke: #3c4043; stroke-width: 1.600; }
.winctl { margin-left: auto; display: flex; }
.wc { width: 12px; height: 12px; margin: -4px 17px 0; fill: none; stroke: #222; stroke-width: 1; }

/* toolbar */
.toolbar { height: 34px; flex: none; background: #fff; display: flex; align-items: center; padding: 2px 0 0 14px; }
.nav-ic { width: 16px; height: 16px; fill: none; stroke: #5f6368; stroke-width: 1.800; }
.nav-ic.fwd { margin-left: 15px; stroke: #b5b7ba; }
.nav-ic.reload { margin-left: 17px; }
.nav-ic .solid { fill: #5f6368; stroke: none; }
.omnibox { width: 1086px; height: 28px; margin-left: 14px; background: #f1f3f4; border-radius: 14px; display: flex; align-items: center; padding-left: 14px; }
.lock { width: 10px; height: 12px; fill: #5f6368; }
.url { margin-left: 10px; font-size: 13.500px; letter-spacing: -.1px; color: #5f6368; }
.url b { font-weight: 400; color: #202124; }
.omni-tr { width: 16px; height: 16px; margin-left: auto; }
.omni-star { width: 16px; height: 16px; margin: 0 10px 0 16px; fill: #5f6368; }
.ext { width: 18px; height: 18px; }
.ext-tr { margin-left: 14px; }
.ext-mc { margin-left: 13px; width: 16px; height: 18px; margin-top: -4px; }
.ext-pz { margin-left: 17px; width: 16px; height: 16px; fill: #5f6368; }
.profile { width: 22px; height: 22px; margin-left: 14px; border-radius: 50%; background: #5d4037; color: #fff; font-size: 12px; display: flex; align-items: center; justify-content: center; }
.dots { margin-left: 18px; display: flex; flex-direction: column; gap: 3px; }
.dots i { width: 3px; height: 3px; border-radius: 50%; background: #5f6368; display: block; }

/* bookmarks */
.bookmarks { height: 34px; flex: none; background: #fff; display: flex; align-items: center; padding: 0 0 2px 15px; font-size: 12px; color: #3c4043; letter-spacing: -.42px; }
.bm { display: flex; align-items: center; gap: 8px; margin-right: 16.300px; white-space: nowrap; }
.bm-apps { gap: 10px; }
.bm-ic { width: 16px; height: 16px; }
.bm-ic.blue { fill: #1a56c4; }
.apps { width: 13px; height: 13px; display: grid; grid-template-columns: repeat(3, 3px); gap: 2px; }
.apps i { width: 3px; height: 3px; display: block; }
.apps .r { background: #ea4335; } .apps .y { background: #fbbc04; } .apps .b { background: #4285f4; } .apps .g { background: #34a853; }
.reading { margin-left: auto; height: 20px; border-left: 1px solid #c8cacc; padding-left: 11px; margin-right: 14px; display: flex; align-items: center; gap: 9px; }
.rl-ic { width: 14px; height: 14px; fill: none; stroke: #5f6368; stroke-width: 1.200; }

/* viewport */
.viewport { flex: 1; min-height: 0; display: flex; position: relative; border-top: 1px solid #d5d7da; }
.page { flex: 1; min-width: 0; background: #fff; overflow: hidden; }
.scrollbar { width: 16px; flex: none; background: #f1f1f1; display: flex; flex-direction: column; align-items: center; }
.thumb { width: 14px; height: 391px; background: #c1c1c1; }
.arr { display: block; width: 0; height: 0; border-left: 4px solid transparent; border-right: 4px solid transparent; }
.arr.up { border-bottom: 5px solid #a3a3a3; margin: 6px 0; }
.arr.down { border-top: 5px solid #505050; margin-top: auto; margin-bottom: 5px; }

/* github header */
.gh-header { height: 62px; background: #24292f; display: flex; align-items: center; padding: 0 32px; color: #fff; }
.gh-logo { width: 32px; height: 32px; fill: #fff; }
.gh-search { width: 272px; height: 30px; margin-left: 16px; border: 1px solid #57606a; border-radius: 6px; display: flex; align-items: center; padding: 0 5px 0 12px; justify-content: space-between; font-size: 14px; color: #d7dade; letter-spacing: -.35px; }
.slash { width: 19px; height: 20px; border: 1px solid #57606a; border-radius: 3px; font-size: 11px; font-family: "Liberation Sans", sans-serif; display: flex; align-items: center; justify-content: center; color: #a6abb1; }
.gh-nav { display: flex; gap: 14.600px; margin-left: 16px; font-size: 14px; font-weight: 600; letter-spacing: -.52px; white-space: nowrap; }
.gh-right { margin-left: auto; display: flex; align-items: center; margin-right: 2px; }
.oct16 { width: 16px; height: 16px; fill: currentColor; display: block; flex: none; }
.plus-group { display: flex; align-items: center; margin-left: 15px; gap: 4px; }
.caret { display: inline-block; width: 0; height: 0; border-left: 4px solid transparent; border-right: 4px solid transparent; border-top: 4px solid #57606a; }
.caret.light { border-top-color: #fff; }
.caret.dark { border-top-color: #24292f; margin-left: 4px; }
.avatar-group { display: flex; align-items: center; margin-left: 17px; position: relative; gap: 3px; }
.avatar { width: 20px; height: 20px; }
.dot { position: absolute; left: 15px; top: -3px; width: 10px; height: 10px; border-radius: 50%; background: #1a73e8; }

/* repo head */
.repohead { height: 112px; background: #f6f8fa; border-bottom: 1px solid #d8dee4; display: flex; flex-direction: column; }
.repo-row { height: 28px; margin-top: 18px; padding: 0 43px 0 32px; display: flex; align-items: center; font-size: 20px; letter-spacing: -.65px; }
.repo-ic { color: #57606a; margin-right: 8px; }
.owner, .rname, .sep { margin-top: -2px; }
.owner, .rname { color: #0969da; }
.rname { font-weight: 600; letter-spacing: -1px; }
.sep { margin-left: 5px; margin-right: 5px; color: #57606a; }
.pub { margin-left: 7px; height: 22px; padding: 0 7px; border: 1px solid #d0d7de; border-radius: 11px; font-size: 12px; font-weight: 500; letter-spacing: -.2px; color: #57606a; display: flex; align-items: center; }
.actions { margin-left: auto; display: flex; gap: 10px; font-size: 12px; letter-spacing: -.3px; }
.btn-group { display: flex; height: 28px; border: 1px solid #d6dae0; border-radius: 6px; background: #fff; overflow: hidden; box-shadow: 0 1px 0 rgba(27,31,36,.04); }
.btn { display: flex; align-items: center; background: #f6f8fa; border-right: 1px solid #d6dae0; color: #24292f; white-space: nowrap; font-weight: 500; }
.btn .oct16 { color: #57606a; }
.btn .caret { border-top-color: #24292f; }
.btn.watch { width: 107px; padding-left: 12px; gap: 3px; }
.btn.watch .caret { margin-left: 4px; }
.btn.star { width: 69px; padding-left: 12px; gap: 7px; }
.btn.fork { width: 68px; padding-left: 12px; gap: 4px; color: #8c959f; }
.btn.fork .oct16 { color: #8c959f; }
.count { width: 31px; display: flex; align-items: center; justify-content: center; color: #24292f; }
.watch + .count { width: 29px; }
.repo-tabs { margin-top: auto; display: flex; padding-left: 32px; height: 48px; font-size: 14px; letter-spacing: -.4px; }
.rt { display: flex; align-items: center; gap: 7px; padding: 0 16px; color: #24292f; white-space: nowrap; margin-bottom: -1px; border-bottom: 2px solid transparent; }
.rt:nth-child(n+4) { padding: 0 16.500px; }
.rt .oct16 { color: #57606a; }
.rt-issues { letter-spacing: -.85px; }
.rt.on { font-weight: 600; letter-spacing: -.7px; border-bottom-color: #fd8c73; padding: 0 15px; }

/* content */
.content { padding: 32px 0 0 67px; display: flex; gap: 24px; width: 1283px; }
.side { width: 296px; height: 343px; flex: none; border: 1px solid #d8dee4; border-radius: 6px; font-size: 14px; letter-spacing: -.5px; overflow: hidden; }
.side-item { height: 38px; display: flex; align-items: center; padding-left: 16px; border-bottom: 1px solid #d8dee4; color: #24292f; }
.side-item:last-child { border-bottom: 0; height: 37px; }
.side-item.on { border-left: 2px solid #fd8c73; padding-left: 14px; }
.main { width: 896px; flex: none; }
.main-head { height: 45px; display: flex; justify-content: space-between; align-items: flex-start; border-bottom: 1px solid #d8dee4; }
.main-head h2 { font-size: 24px; line-height: 38px; letter-spacing: -.62px; white-space: nowrap; }
.period { height: 32px; width: 137px; display: flex; align-items: center; justify-content: center; background: #f6f8fa; border: 1px solid #d8dee4; border-radius: 6px; font-size: 14px; letter-spacing: -.4px; color: #57606a; white-space: pre; }
.period b { font-weight: 500; color: #24292f; }
.box { margin-top: 16px; height: 218px; border: 1px solid #d0d7de; border-radius: 6px; overflow: hidden; }
.box-head { height: 54px; background: #f6f8fa; border-bottom: 1px solid #d8dee4; display: flex; align-items: center; padding-left: 16px; font-size: 14px; font-weight: 600; letter-spacing: -.5px; }
.box-bars { height: 85px; padding: 24px 16px 0; display: flex; gap: 32px; border-bottom: 1px solid #d8dee4; }
.barcol { flex: 1; font-size: 14px; letter-spacing: -.5px; }
.barcol p { margin-top: 9px; line-height: 20px; color: #57606a; }
.barcol b { color: #24292f; font-weight: 600; }
.track { height: 8px; background: #eef0f2; border-radius: 4px; overflow: hidden; }
.fill { height: 100%; background: #8250df; }
.stats { display: grid; grid-template-columns: 223px 223px 224px 224px; height: 77px; }
.stat { border-left: 1px solid #d8dee4; text-align: center; padding-top: 19px; }
.stat:first-child { border-left: 0; }
.num { display: flex; align-items: center; justify-content: center; gap: 4px; font-size: 16px; font-weight: 600; line-height: 20px; }
.purple { color: #8250df; } .green { color: #1a7f37; }
.lbl { margin-top: 2px; font-size: 14px; line-height: 20px; letter-spacing: -.45px; color: #57606a; }
.summary { margin-top: 37px; display: flex; justify-content: space-between; }
.sumtext { margin-top: 27px; font-size: 16px; line-height: 24px; letter-spacing: -.57px; color: #57606a; white-space: nowrap; flex: none; }
.sumtext b { color: #24292f; font-weight: 600; }
.chart { width: 446px; height: 110px; }
.gridl path { stroke: #d0d7de; stroke-width: 1; fill: none; }
.ticks text { font-family: "Liberation Sans", sans-serif; font-size: 10px; fill: #57606a; text-anchor: end; }

/* overlays */
.watermark { position: absolute; left: 1014px; top: 547px; color: #c3c3c3; white-space: nowrap; }
.wm1 { font-size: 19.500px; line-height: 24px; letter-spacing: -.4px; }
.wm2 { font-size: 14px; line-height: 20px; margin-top: 1px; }
.sharebar { position: absolute; left: 457px; top: 574px; width: 453px; height: 43px; background: rgba(255,255,255,.96); border: 1px solid #d9d9d9; box-shadow: 0 2px 5px rgba(0,0,0,.22); display: flex; align-items: center; }
.grip { width: 5px; height: 10px; margin-left: 10px; border-left: 2px solid #bdbdbd; border-right: 2px solid #bdbdbd; }
.share-t { margin-left: 11px; font-size: 11.500px; letter-spacing: -.13px; color: #3c4043; white-space: nowrap; }
.share-b { position: absolute; left: 272px; top: 4px; width: 133px; height: 32px; background: #1a73e8; border-radius: 3px; color: #fff; font-size: 12px; font-weight: 600; letter-spacing: -.45px; display: flex; align-items: center; justify-content: center; }
.share-h { position: absolute; left: 415px; top: 12px; font-size: 12px; color: #1a73e8; letter-spacing: -.2px; }

/* taskbar */
.taskbar { height: 40px; flex: none; background: linear-gradient(90deg, #e5d4e6 0 785px, #e2d1d2 785px 100%); display: flex; align-items: center; font-size: 14px; color: #111; }
.winlogo { width: 16px; height: 16px; margin-left: 16px; fill: #111; }
.tb-search { width: 343px; height: 40px; margin: 0 2px 0 16px; background: #fff; border: 1px solid #c8c8c8; display: flex; align-items: center; padding-left: 12px; gap: 10px; font-size: 14px; letter-spacing: .1px; color: #3a3a3a; }
.tb-mag { width: 17px; height: 17px; fill: none; stroke: #222; stroke-width: 1.300; }
.tile { width: 49px; height: 40px; display: flex; align-items: center; justify-content: center; position: relative; flex: none; }
.tile.active { background: #f2e8ea; border-bottom: 2px solid #0078d7; border-right: 1px solid #cfc4c6; }
.tb-ic { width: 24px; height: 24px; }
.tvw { width: 16px; height: 16px; fill: none; stroke: #111; stroke-width: 1; }
.w-txt { font-family: "Liberation Sans", sans-serif; font-size: 11px; font-weight: 700; fill: #fff; text-anchor: middle; }
.badge { position: absolute; right: 7px; bottom: 3px; width: 16px; height: 16px; border-radius: 50%; background: #d3d3d3; border: 1px solid #555; font-size: 11px; display: flex; align-items: center; justify-content: center; }
.tray { margin-left: auto; display: flex; align-items: center; font-size: 13px; height: 40px; }
.tr-weather { width: 23px; height: 20px; }
.temp { margin-left: 8px; white-space: nowrap; letter-spacing: .3px; }
.wx { margin-left: 9px; white-space: nowrap; letter-spacing: -.05px; }
.tr { width: 16px; height: 16px; fill: none; stroke: #111; stroke-width: 1.100; }
.chev { margin-left: 15px; width: 14px; height: 14px; }
.cloud { margin-left: 10px; width: 18px; height: 14px; }
.mic { margin-left: 7px; width: 14px; height: 18px; }
.meet { margin-left: 8px; width: 18px; height: 18px; }
.batt { margin-left: 6px; width: 18px; height: 12px; }
.wifi { margin-left: 8px; }
.vol { margin-left: 8px; }
.clock { width: 76px; text-align: center; font-size: 12px; line-height: 19px; letter-spacing: -.45px; }
.notif { width: 28px; height: 40px; margin-left: 5.500px; position: relative; display: flex; align-items: center; justify-content: center; }
.notif-ic { width: 16px; height: 14px; fill: #111; margin-top: -4px; margin-left: -6px; }
.notif-n { position: absolute; right: 0; top: 20px; width: 20px; height: 15px; border-radius: 9px; background: #d3cbcb; border: 1px solid #555; font-size: 11px; display: flex; align-items: center; justify-content: center; }
.desktop { display: block; width: 1px; height: 40px; margin-left: 10px; background: #b9acac; }
```
